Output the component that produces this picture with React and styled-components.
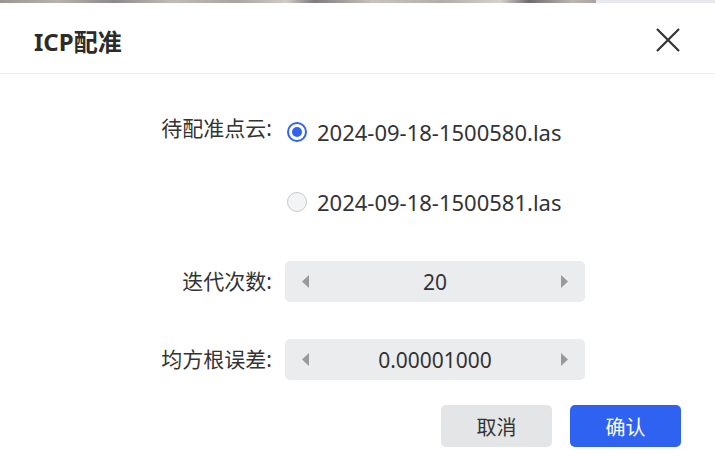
import React, { useState } from "react";
import styled, { createGlobalStyle } from "styled-components";

const GlobalStyle = createGlobalStyle`
  html, body {
    margin: 0;
    padding: 0;
    background: #ffffff;
  }
  body {
    font-family: "Noto Sans", "Noto Sans CJK SC", sans-serif;
    color: #333333;
  }
`;

const Dialog = styled.div`
  width: 715px;
  height: 463px;
  background: #fff;
  display: flex;
  flex-direction: column;
  overflow: hidden;
`;

// sliver of the page behind the modal
const Backdrop = styled.div`
  height: 3px;
  flex-shrink: 0;
  background: linear-gradient(
    90deg,
    #9b9593 0%,
    #b8b2ae 8%,
    #8e8a8a 16%,
    #c2bcb8 24%,
    #a9a4a2 33%,
    #d0cbc7 40%,
    #7f7b7c 44%,
    #c9c3bf 52%,
    #b3aeab 62%,
    #d6d1cd 70%,
    #6f6c6e 74%,
    #bcb6b2 80%,
    #aaa39f 83.3%,
    #e8e8ef 83.4%,
    #e8e8ef 100%
  );
`;

const Header = styled.header`
  height: 71px;
  box-sizing: border-box;
  padding: 4px 34px 0 34px;
  display: flex;
  align-items: center;
  justify-content: space-between;
  border-bottom: 1px solid #ebebeb;
`;

const Title = styled.h2`
  margin: 0;
  font-size: 24px;
  font-weight: 700;
  color: #2b2b2b;
`;

const CloseButton = styled.button`
  width: 24px;
  height: 24px;
  padding: 0;
  border: none;
  background: none;
  cursor: pointer;
  display: flex;
  align-items: center;
  justify-content: center;
  margin-right: 1px;
`;

const Form = styled.div`
  padding-top: 38px;
  display: grid;
  grid-template-columns: 272px 300px;
  column-gap: 13px;
  row-gap: 37px;
  align-items: center;
`;

const Label = styled.div`
  font-size: 21px;
  text-align: right;
  line-height: ${(p) => (p.$top ? "32px" : "41px")};
  align-self: ${(p) => (p.$top ? "start" : "center")};
  white-space: nowrap;
`;

const RadioGroup = styled.div`
  display: flex;
  flex-direction: column;
  gap: 30px;
  margin-bottom: 2px;
`;

const RadioOption = styled.label`
  height: 40px;
  display: flex;
  align-items: center;
  gap: 10px;
  font-size: 22px;
  cursor: pointer;
  white-space: nowrap;
`;

const RadioDot = styled.span`
  width: 20px;
  height: 20px;
  margin-left: 2px;
  box-sizing: border-box;
  border-radius: 50%;
  border: ${(p) => (p.$checked ? "2px solid #3163f0" : "1.5px solid #c9c9cc")};
  background: ${(p) => (p.$checked ? "#fff" : "#f3f4f6")};
  display: flex;
  align-items: center;
  justify-content: center;

  &::after {
    content: "";
    width: 10px;
    height: 10px;
    border-radius: 50%;
    background: #3163f0;
    display: ${(p) => (p.$checked ? "block" : "none")};
  }
`;

const Stepper = styled.div`
  height: 41px;
  border-radius: 5px;
  background: #ebecee;
  display: flex;
  align-items: center;
  padding: 0 17px;
  box-sizing: border-box;
`;

const Arrow = styled.button`
  width: 7px;
  height: 13px;
  padding: 0;
  border: none;
  background: none;
  cursor: pointer;
  display: flex;
  flex-shrink: 0;
`;

const StepValue = styled.span`
  flex: 1;
  text-align: center;
  font-size: 21px;
  color: #333;
`;

const Footer = styled.div`
  margin-top: 25px;
  padding-right: 34px;
  display: flex;
  justify-content: flex-end;
  gap: 18px;
`;

const Button = styled.button`
  width: 111px;
  height: 42px;
  border: none;
  border-radius: 5px;
  font-family: inherit;
  font-size: 20px;
  cursor: pointer;
  background: ${(p) => (p.$primary ? "#3062f2" : "#e4e5e7")};
  color: ${(p) => (p.$primary ? "#ffffff" : "#333333")};
`;

const Triangle = ({ dir }) => (
  <svg width="7" height="13" viewBox="0 0 7 13">
    <path d={dir === "left" ? "M7 0 L0 6.5 L7 13 Z" : "M0 0 L7 6.5 L0 13 Z"} fill="#9a9a9a" />
  </svg>
);

const NumberStepper = ({ value }) => (
  <Stepper>
    <Arrow aria-label="decrease">
      <Triangle dir="left" />
    </Arrow>
    <StepValue>{value}</StepValue>
    <Arrow aria-label="increase">
      <Triangle dir="right" />
    </Arrow>
  </Stepper>
);

const files = ["2024-09-18-1500580.las", "2024-09-18-1500581.las"];

export default function App() {
  const [selected, setSelected] = useState(files[0]);

  return (
    <>
      <GlobalStyle />
      <Dialog>
        <Backdrop />
        <Header>
          <Title>ICP配准</Title>
          <CloseButton aria-label="close">
            <svg width="24" height="24" viewBox="0 0 24 24">
              <path d="M1 1 L23 23 M23 1 L1 23" stroke="#333" strokeWidth="2.2" fill="none" />
            </svg>
          </CloseButton>
        </Header>

        <Form>
          <Label $top>待配准点云:</Label>
          <RadioGroup>
            {files.map((f) => (
              <RadioOption key={f} onClick={() => setSelected(f)}>
                <RadioDot $checked={selected === f} />
                {f}
              </RadioOption>
            ))}
          </RadioGroup>

          <Label>迭代次数:</Label>
          <NumberStepper value="20" />

          <Label>均方根误差:</Label>
          <NumberStepper value="0.00001000" />
        </Form>

        <Footer>
          <Button>取消</Button>
          <Button $primary>确认</Button>
        </Footer>
      </Dialog>
    </>
  );
}
